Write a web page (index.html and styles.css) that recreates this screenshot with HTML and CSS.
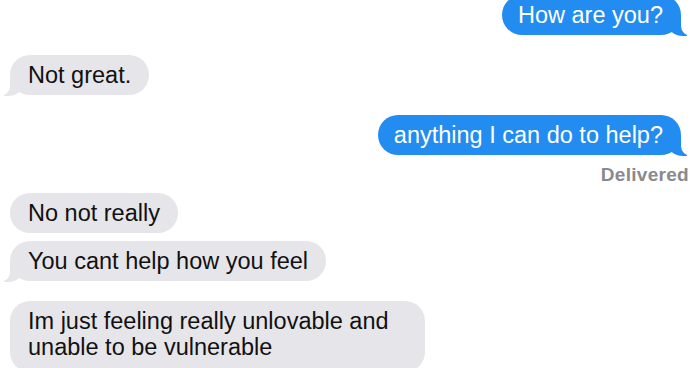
FILE: index.html
```html
<!DOCTYPE html>
<html lang="en">
<head>
    <meta charset="UTF-8">
    <meta name="viewport" content="width=device-width, initial-scale=1.0">
    <title>Messages</title>
    <link rel="stylesheet" href="styles.css">
</head>
<body>
    <div class="thread">
        <div class="msg sent tail first">How are you?</div>
        <div class="msg received tail gap">Not great.</div>
        <div class="msg sent tail gap">anything I can do to help?</div>
        <div class="status">Delivered</div>
        <div class="msg received">No not really</div>
        <div class="msg received tail">You cant help how you feel</div>
        <div class="msg received wide gap">Im just feeling really unlovable and unable to be vulnerable</div>
    </div>
</body>
</html>
```

FILE: styles.css
```css
body {
    margin: 0;
    background: #fff;
    font-family: "Liberation Sans", Arial, sans-serif;
    overflow: hidden;
}
.thread {
    display: flex;
    flex-direction: column;
    padding: 0 19px 0 10px;
}
.msg {
    position: relative;
    max-width: 415px;
    box-sizing: border-box;
    padding: 7px 18px;
    border-radius: 20px;
    font-size: 23.5px;
    line-height: 26px;
    margin-top: 8px;
}
.first {
    margin-top: -5px;
}
.gap {
    margin-top: 20px;
}
.sent {
    align-self: flex-end;
    background: #228cf0;
    color: #fff;
    padding-left: 16px;
}
.received {
    align-self: flex-start;
    background: #e6e6ea;
    color: #111;
}
.wide {
    width: 415px;
    padding-bottom: 12px;
}

/* bubble tails */
.tail::before,
.tail::after {
    content: "";
    position: absolute;
    bottom: -1px;
    height: 20px;
}
.sent.tail::before {
    right: -6px;
    width: 20px;
    background: #228cf0;
    border-bottom-left-radius: 16px 14px;
}
.sent.tail::after {
    right: -26px;
    width: 26px;
    background: #fff;
    border-bottom-left-radius: 10px;
}
.received.tail::before {
    left: -6px;
    width: 20px;
    background: #e6e6ea;
    border-bottom-right-radius: 16px 14px;
}
.received.tail::after {
    left: -26px;
    width: 26px;
    background: #fff;
    border-bottom-right-radius: 10px;
}

.status {
    align-self: flex-end;
    margin: 10px -8px 0 0;
    font-size: 19px;
    line-height: 20px;
    font-weight: bold;
    letter-spacing: 0.3px;
    color: #8a8a8e;
}
```
